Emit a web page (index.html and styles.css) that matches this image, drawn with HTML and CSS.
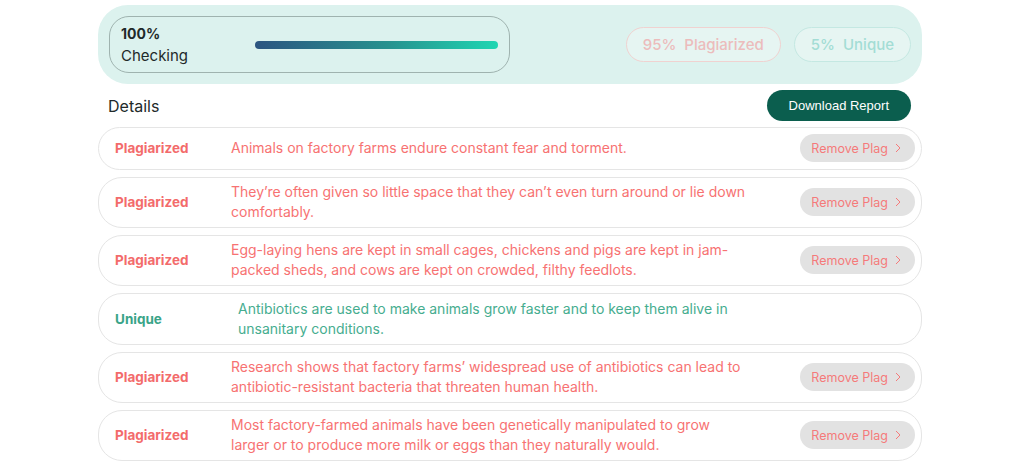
FILE: index.html
```html
<!DOCTYPE html>
<html lang="en">
<head>
    <meta charset="UTF-8">
    <meta name="viewport" content="width=device-width, initial-scale=1.0">
    <title>Plagiarism Check</title>
    <link rel="stylesheet" href="styles.css">
</head>
<body>
    <div id="app">
        <div class="summary">
            <div class="progress-box">
                <div class="progress-text">
                    <strong>100%</strong>
                    <span>Checking</span>
                </div>
                <div class="progress-bar"></div>
            </div>
            <div class="pills">
                <span class="pill pill-plag">95%&nbsp; Plagiarized</span>
                <span class="pill pill-unique">5%&nbsp; Unique</span>
            </div>
        </div>

        <div class="details-head">
            <h2>Details</h2>
            <button class="download">Download Report</button>
        </div>

        <div class="rows">
            <div class="row">
                <span class="tag">Plagiarized</span>
                <p class="sentence">Animals on factory farms endure constant fear and torment.</p>
                <button class="remove">Remove Plag <svg class="chev" viewBox="0 0 6 10"><path d="M1 1l4 4-4 4"/></svg></button>
            </div>
            <div class="row">
                <span class="tag">Plagiarized</span>
                <p class="sentence">They’re often given so little space that they can’t even turn around or lie down comfortably.</p>
                <button class="remove">Remove Plag <svg class="chev" viewBox="0 0 6 10"><path d="M1 1l4 4-4 4"/></svg></button>
            </div>
            <div class="row">
                <span class="tag">Plagiarized</span>
                <p class="sentence">Egg-laying hens are kept in small cages, chickens and pigs are kept in jam-packed sheds, and cows are kept on crowded, filthy feedlots.</p>
                <button class="remove">Remove Plag <svg class="chev" viewBox="0 0 6 10"><path d="M1 1l4 4-4 4"/></svg></button>
            </div>
            <div class="row row-unique">
                <span class="tag">Unique</span>
                <p class="sentence">Antibiotics are used to make animals grow faster and to keep them alive in unsanitary conditions.</p>
            </div>
            <div class="row">
                <span class="tag">Plagiarized</span>
                <p class="sentence">Research shows that factory farms’ widespread use of antibiotics can lead to antibiotic-resistant bacteria that threaten human health.</p>
                <button class="remove">Remove Plag <svg class="chev" viewBox="0 0 6 10"><path d="M1 1l4 4-4 4"/></svg></button>
            </div>
            <div class="row">
                <span class="tag">Plagiarized</span>
                <p class="sentence">Most factory-farmed animals have been genetically manipulated to grow larger or to produce more milk or eggs than they naturally would.</p>
                <button class="remove">Remove Plag <svg class="chev" viewBox="0 0 6 10"><path d="M1 1l4 4-4 4"/></svg></button>
            </div>
        </div>
    </div>
</body>
</html>
```

FILE: styles.css
```css
body {
    margin: 0;
    background-color: #ffffff;
    font-family: "Inter", "Open Sans", sans-serif;
    color: #222222;
}

#app {
    width: 824px;
    margin-left: 98px;
    padding-top: 5px;
}

.summary {
    display: flex;
    align-items: center;
    justify-content: space-between;
    height: 79px;
    padding: 0 11px;
    background-color: #dcf2ee;
    border-radius: 30px;
    box-sizing: border-box;
}

.progress-box {
    display: flex;
    align-items: center;
    width: 401px;
    height: 57px;
    padding: 0 11px;
    border: 1px solid #9fb3af;
    border-radius: 20px;
    box-sizing: border-box;
}

.progress-text {
    display: flex;
    flex-direction: column;
    width: 134px;
    font-size: 15px;
    line-height: 22px;
    color: #1f2a2a;
}

.progress-text strong {
    font-size: 14px;
    font-weight: 700;
}

.progress-bar {
    width: 244px;
    height: 8px;
    border-radius: 4px;
    background: linear-gradient(90deg, #2c5580, #27928f 55%, #1fd6b2);
}

.pills {
    display: flex;
    gap: 13px;
}

.pill {
    display: flex;
    align-items: center;
    height: 35px;
    padding: 0 16px;
    border-radius: 18px;
    font-size: 15px;
    font-weight: 500;
    background-color: #e6f5f2;
    box-sizing: border-box;
}

.pill-plag {
    color: #ecbcbc;
    border: 1px solid #f0d2d0;
}

.pill-unique {
    color: #a3ddd5;
    border: 1px solid #c4e8e2;
}

.details-head {
    display: flex;
    align-items: center;
    justify-content: space-between;
    padding: 6px 11px 0 10px;
}

.details-head h2 {
    margin: 0;
    font-size: 16px;
    font-weight: 400;
    color: #222a2a;
}

.download {
    height: 31px;
    padding: 0 22px;
    border: none;
    border-radius: 16px;
    background-color: #0b5e4e;
    color: #ffffff;
    font-family: "Liberation Sans", Arial, sans-serif;
    font-size: 13px;
}

.rows {
    display: flex;
    flex-direction: column;
    gap: 7px;
    margin-top: 6px;
}

.row {
    display: flex;
    align-items: center;
    min-height: 43px;
    padding: 4px 6px 5px 16px;
    border: 1px solid #e5e5e5;
    border-radius: 24px;
    box-sizing: border-box;
}

.tag {
    width: 116px;
    flex-shrink: 0;
    font-size: 13.5px;
    font-weight: 700;
    color: #f36b6b;
}

.sentence {
    width: 520px;
    margin: 0;
    font-size: 14px;
    line-height: 20px;
    color: #f77272;
}

.remove {
    display: flex;
    align-items: center;
    gap: 7px;
    height: 28px;
    margin-left: auto;
    padding: 0 14px 0 11px;
    border: none;
    border-radius: 14px;
    background-color: #e2e2e2;
    color: #f57a7a;
    font-family: "Inter", "Open Sans", sans-serif;
    font-size: 12.5px;
}

.chev {
    width: 6px;
    height: 10px;
    fill: none;
    stroke: #f57a7a;
    stroke-width: 1;
}

.row-unique {
    min-height: 52px;
}

.row-unique .tag {
    color: #3aa488;
}

.row-unique .sentence {
    margin-left: 7px;
    color: #46ad8f;
}
```
